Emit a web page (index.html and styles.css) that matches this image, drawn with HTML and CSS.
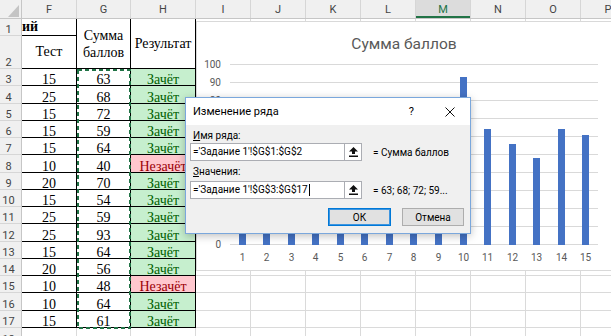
FILE: index.html
```html
<!DOCTYPE html>
<html lang="ru">
<head>
  <meta charset="UTF-8">
  <meta name="viewport" content="width=device-width, initial-scale=1.0">
  <title>Изменение ряда</title>
  <link rel="stylesheet" href="styles.css">
</head>
<body>
  <div id="sheet">
    <div class="colHeads">
      <div class="corner">
        <svg width="21" height="18"><polygon points="19,5 19,17 8,17" fill="#c4c4c4"/></svg>
      </div>
      <div class="colHead wF">F</div>
      <div class="colHead wG">G</div>
      <div class="colHead wH">H</div>
      <div class="colHead">I</div>
      <div class="colHead">J</div>
      <div class="colHead">K</div>
      <div class="colHead">L</div>
      <div class="colHead active">M</div>
      <div class="colHead">N</div>
      <div class="colHead">O</div>
      <div class="colHead">P</div>
    </div>

    <div class="grid">
      <div class="rowHead">1</div>
      <div class="cell tbl cut">ий</div>
      <div class="cell tbl title span2">Сумма баллов</div>
      <div class="cell tbl title span2">Результат</div>
      <div class="rest"></div>

      <div class="rowHead">2</div>
      <div class="cell tbl middle">Тест</div>
      <div class="rest"></div>

      <div class="rowHead">3</div><div class="cell tbl">15</div><div class="cell tbl">63</div><div class="cell tbl ok">Зачёт</div><div class="rest"></div>
      <div class="rowHead">4</div><div class="cell tbl">25</div><div class="cell tbl">68</div><div class="cell tbl ok">Зачёт</div><div class="rest"></div>
      <div class="rowHead">5</div><div class="cell tbl">15</div><div class="cell tbl">72</div><div class="cell tbl ok">Зачёт</div><div class="rest"></div>
      <div class="rowHead">6</div><div class="cell tbl">15</div><div class="cell tbl">59</div><div class="cell tbl ok">Зачёт</div><div class="rest"></div>
      <div class="rowHead">7</div><div class="cell tbl">15</div><div class="cell tbl">64</div><div class="cell tbl ok">Зачёт</div><div class="rest"></div>
      <div class="rowHead">8</div><div class="cell tbl">10</div><div class="cell tbl">40</div><div class="cell tbl fail">Незачёт</div><div class="rest"></div>
      <div class="rowHead">9</div><div class="cell tbl">20</div><div class="cell tbl">70</div><div class="cell tbl ok">Зачёт</div><div class="rest"></div>
      <div class="rowHead">10</div><div class="cell tbl">15</div><div class="cell tbl">54</div><div class="cell tbl ok">Зачёт</div><div class="rest"></div>
      <div class="rowHead">11</div><div class="cell tbl">25</div><div class="cell tbl">59</div><div class="cell tbl ok">Зачёт</div><div class="rest"></div>
      <div class="rowHead">12</div><div class="cell tbl">25</div><div class="cell tbl">93</div><div class="cell tbl ok">Зачёт</div><div class="rest"></div>
      <div class="rowHead">13</div><div class="cell tbl">15</div><div class="cell tbl">64</div><div class="cell tbl ok">Зачёт</div><div class="rest"></div>
      <div class="rowHead">14</div><div class="cell tbl">20</div><div class="cell tbl">56</div><div class="cell tbl ok">Зачёт</div><div class="rest"></div>
      <div class="rowHead">15</div><div class="cell tbl">10</div><div class="cell tbl">48</div><div class="cell tbl fail">Незачёт</div><div class="rest"></div>
      <div class="rowHead">16</div><div class="cell tbl">10</div><div class="cell tbl">64</div><div class="cell tbl ok">Зачёт</div><div class="rest"></div>
      <div class="rowHead">17</div><div class="cell tbl">15</div><div class="cell tbl">61</div><div class="cell tbl ok">Зачёт</div><div class="rest"></div>

      <div class="rowHead">18</div><div class="cell"></div><div class="cell"></div><div class="cell"></div><div class="rest"></div>
    </div>

    <!-- copy marquee around G3:G17 -->
    <svg class="marquee" width="56" height="262">
      <rect x="2" y="2" width="52" height="258" fill="none" stroke="#217346" stroke-width="2" stroke-dasharray="4 3"/>
    </svg>

    <div id="chart">
      <svg width="416" height="248" class="chartSvg">
        <text x="207" y="27" class="chartTitle">Сумма баллов</text>
        <g class="gridLines">
          <line x1="33" x2="401" y1="42.5" y2="42.5"/>
          <line x1="33" x2="401" y1="60.5" y2="60.5"/>
          <line x1="33" x2="401" y1="78.5" y2="78.5"/>
          <line x1="33" x2="401" y1="96.5" y2="96.5"/>
          <line x1="33" x2="401" y1="114.5" y2="114.5"/>
          <line x1="33" x2="401" y1="132.5" y2="132.5"/>
          <line x1="33" x2="401" y1="150.5" y2="150.5"/>
          <line x1="33" x2="401" y1="168.5" y2="168.5"/>
          <line x1="33" x2="401" y1="186.5" y2="186.5"/>
          <line x1="33" x2="401" y1="204.5" y2="204.5"/>
          <line x1="33" x2="401" y1="222.5" y2="222.5"/>
        </g>
        <g class="yLabels">
          <text x="24" y="46">100</text>
          <text x="24" y="64">90</text>
          <text x="24" y="82">80</text>
          <text x="24" y="100">70</text>
          <text x="24" y="118">60</text>
          <text x="24" y="136">50</text>
          <text x="24" y="154">40</text>
          <text x="24" y="172">30</text>
          <text x="24" y="190">20</text>
          <text x="24" y="208">10</text>
          <text x="24" y="226">0</text>
        </g>
        <g class="bars">
          <rect x="42" y="109" width="7" height="114"/>
          <rect x="66" y="100" width="7" height="123"/>
          <rect x="91" y="93" width="7" height="130"/>
          <rect x="115" y="116" width="7" height="107"/>
          <rect x="140" y="107" width="7" height="116"/>
          <rect x="164" y="151" width="7" height="72"/>
          <rect x="189" y="96" width="7" height="127"/>
          <rect x="213" y="125" width="7" height="98"/>
          <rect x="238" y="116" width="7" height="107"/>
          <rect x="263" y="55" width="7" height="168"/>
          <rect x="287" y="107" width="7" height="116"/>
          <rect x="312" y="122" width="7" height="101"/>
          <rect x="336" y="136" width="7" height="87"/>
          <rect x="361" y="107" width="7" height="116"/>
          <rect x="385" y="113" width="7" height="110"/>
        </g>
        <g class="xLabels">
          <text x="45.5" y="239">1</text>
          <text x="69.5" y="239">2</text>
          <text x="94.5" y="239">3</text>
          <text x="118.5" y="239">4</text>
          <text x="143.5" y="239">5</text>
          <text x="167.5" y="239">6</text>
          <text x="192.5" y="239">7</text>
          <text x="216.5" y="239">8</text>
          <text x="241.5" y="239">9</text>
          <text x="266.5" y="239">10</text>
          <text x="290.5" y="239">11</text>
          <text x="315.5" y="239">12</text>
          <text x="339.5" y="239">13</text>
          <text x="364.5" y="239">14</text>
          <text x="388.5" y="239">15</text>
        </g>
      </svg>
    </div>

    <div id="dialog">
      <div class="dlgTitle">
        <span class="dlgCaption">Изменение ряда</span>
        <span class="dlgHelp">?</span>
        <svg class="dlgClose" width="10" height="10"><path d="M0.5 0.5 L9.5 9.5 M9.5 0.5 L0.5 9.5" stroke="#111" stroke-width="1" fill="none"/></svg>
      </div>
      <div class="dlgBody">
        <div class="dlgLabel"><u>И</u>мя ряда:</div>
        <div class="refRow">
          <div class="refBox">='Задание 1'!$G$1:$G$2</div>
          <div class="refBtn">
            <svg width="9" height="10"><path d="M4.5 0 L9 4.5 L6 4.5 L6 7 L3 7 L3 4.5 L0 4.5 Z M0 8.5 H9 V10 H0 Z" fill="#111"/></svg>
          </div>
          <div class="refValue">= Сумма баллов</div>
        </div>
        <div class="dlgLabel second"><u>З</u>начения:</div>
        <div class="refRow">
          <div class="refBox">='Задание 1'!$G$3:$G$17<span class="caret"></span></div>
          <div class="refBtn">
            <svg width="9" height="10"><path d="M4.5 0 L9 4.5 L6 4.5 L6 7 L3 7 L3 4.5 L0 4.5 Z M0 8.5 H9 V10 H0 Z" fill="#111"/></svg>
          </div>
          <div class="refValue">= 63; 68; 72; 59...</div>
        </div>
        <div class="dlgButtons">
          <button class="dlgBtn default">ОК</button>
          <button class="dlgBtn">Отмена</button>
        </div>
      </div>
    </div>
  </div>
</body>
</html>
```

FILE: styles.css
```css
body {
  margin: 0;
  width: 611px;
  height: 336px;
  overflow: hidden;
  background-color: #fff;
  font-family: "Liberation Serif", "Times New Roman", serif;
}
#sheet {
  position: relative;
}

/* column headers */
.colHeads {
  display: flex;
  height: 19px;
  background-color: #f0f0f0;
  border-bottom: 1px solid #c6c6c6;
  box-sizing: border-box;
}
.corner {
  flex: none;
  width: 22px;
  border-right: 1px solid #c6c6c6;
  box-sizing: border-box;
}
.colHead {
  flex: none;
  width: 55px;
  border-right: 1px solid #d6d6d6;
  box-sizing: border-box;
  display: flex;
  align-items: center;
  justify-content: center;
  font-family: Roboto, "Liberation Sans", sans-serif;
  font-size: 11px;
  color: #444;
}
.colHead.wG {
  width: 54px;
}
.colHead.wH {
  width: 65px;
}
.colHead.active {
  background-color: #dcdcdc;
  color: #217346;
  box-shadow: inset 0 -2px 0 #217346;
}

/* cells */
.grid {
  display: grid;
  grid-template-columns: 22px 55px 54px 65px 440px;
  grid-template-rows: 17px 33px 17px 18px 17px 17px 17px 18px 17px 17px 17px 18px 17px 17px 17px 18px 17px 18px;
}
.rowHead {
  background-color: #f0f0f0;
  border-right: 1px solid #c6c6c6;
  border-bottom: 1px solid #d6d6d6;
  box-sizing: border-box;
  display: flex;
  align-items: flex-end;
  justify-content: center;
  padding-right: 4px;
  font-family: Roboto, "Liberation Sans", sans-serif;
  font-size: 11px;
  line-height: 11px;
  color: #444;
}
.cell {
  border-right: 1px solid #dadada;
  border-bottom: 1px solid #dadada;
  box-sizing: border-box;
  display: flex;
  align-items: flex-end;
  justify-content: center;
  font-size: 14px;
  line-height: 11px;
  color: #000;
  overflow: hidden;
  white-space: nowrap;
}
.cell.tbl {
  border-right-color: #000;
  border-bottom-color: #000;
}
.cell.cut {
  justify-content: flex-start;
  align-items: center;
  font-weight: bold;
  line-height: 16px;
}
.cell.title {
  grid-row: span 2;
  align-items: center;
  text-align: center;
  white-space: normal;
  line-height: 17px;
  padding: 0 4px;
}
.cell.middle {
  align-items: center;
  line-height: 16px;
}
.cell.ok {
  background-color: #c6efce;
  color: #006100;
}
.cell.fail {
  background-color: #ffc7ce;
  color: #9c0006;
}
.rest {
  border-bottom: 1px solid #dadada;
  box-sizing: border-box;
  background-image: repeating-linear-gradient(to right, transparent 0, transparent 54px, #dadada 54px, #dadada 55px);
}

.marquee {
  position: absolute;
  left: 76px;
  top: 68px;
}

/* chart */
#chart {
  position: absolute;
  left: 196px;
  top: 21px;
  width: 420px;
  height: 248px;
  background-color: #fff;
  border: 1px solid #d9d9d9;
}
.chartSvg {
  display: block;
  font-family: Roboto, "Liberation Sans", sans-serif;
}
.chartTitle {
  font-size: 15.5px;
  fill: #595959;
  text-anchor: middle;
}
.gridLines line {
  stroke: #d9d9d9;
  stroke-width: 1;
}
.yLabels text {
  font-size: 10px;
  fill: #595959;
  text-anchor: end;
}
.xLabels text {
  font-size: 10px;
  fill: #595959;
  text-anchor: middle;
}
.bars rect {
  fill: #4472c4;
}

/* dialog */
#dialog {
  position: absolute;
  left: 185px;
  top: 97px;
  width: 286px;
  border: 1px solid #7aa7dc;
  box-sizing: border-box;
  background-color: #f0f0f0;
  box-shadow: 0 2px 8px rgba(0, 0, 0, 0.25);
  font-family: Roboto, "Liberation Sans", sans-serif;
  color: #000;
}
.dlgTitle {
  height: 27px;
  background-color: #fff;
  display: flex;
  align-items: center;
  padding: 0 15px 0 7px;
}
.dlgCaption {
  flex: 1;
  font-size: 11px;
}
.dlgHelp {
  font-size: 11px;
  margin-right: 31px;
}
.dlgClose {
  display: block;
}
.dlgBody {
  padding: 4px 6px 7px 4px;
}
.dlgLabel {
  font-size: 10px;
  line-height: 14px;
  padding-left: 3px;
}
.dlgLabel.second {
  margin-top: 4px;
  margin-bottom: 2px;
}
.refRow {
  display: flex;
  align-items: center;
  height: 18px;
}
.refBox {
  width: 155px;
  height: 18px;
  box-sizing: border-box;
  background-color: #fff;
  border: 1px solid #abadb3;
  padding-left: 2px;
  font-size: 10px;
  line-height: 16px;
  white-space: nowrap;
  display: flex;
  align-items: center;
}
.caret {
  display: inline-block;
  width: 1px;
  height: 12px;
  background-color: #000;
  margin-left: 1px;
}
.refBtn {
  width: 17px;
  height: 18px;
  box-sizing: border-box;
  background-color: #fff;
  border: 1px solid #abadb3;
  border-left: none;
  display: flex;
  align-items: center;
  justify-content: center;
}
.refValue {
  margin-left: 11px;
  font-size: 10px;
  white-space: nowrap;
}
.dlgButtons {
  display: flex;
  justify-content: flex-end;
  gap: 11px;
  margin-top: 9px;
}
.dlgBtn {
  width: 62px;
  height: 18px;
  padding: 0;
  background-color: #e1e1e1;
  border: 1px solid #adadad;
  font-family: Roboto, "Liberation Sans", sans-serif;
  font-size: 10px;
  color: #000;
}
.dlgBtn.default {
  width: 63px;
  border-color: #0078d7;
  box-shadow: inset 0 0 0 1px #3d95e0;
}
```
